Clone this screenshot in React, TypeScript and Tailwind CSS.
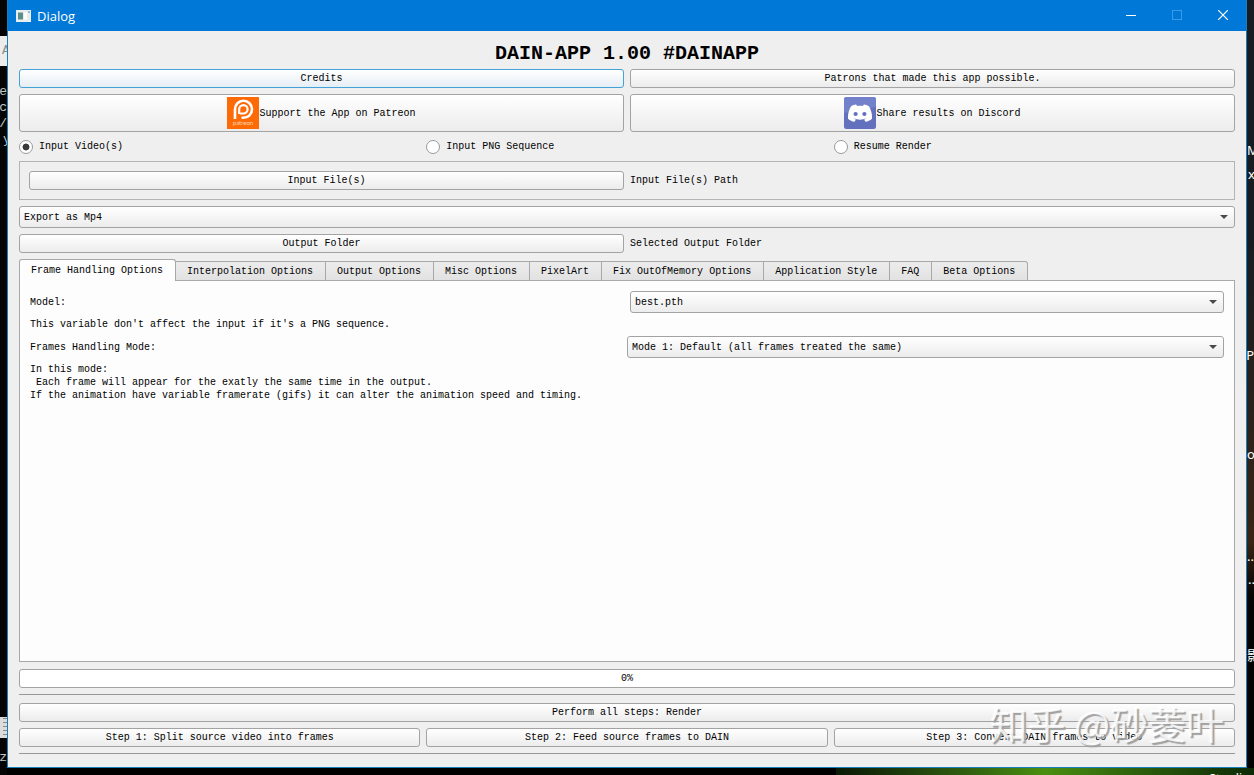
import { useState } from "react";
import type { ReactNode } from "react";

const MONO = "font-['Liberation_Mono','Noto_Sans_CJK_SC',monospace]";

const TABS = [
  "Frame Handling Options",
  "Interpolation Options",
  "Output Options",
  "Misc Options",
  "PixelArt",
  "Fix OutOfMemory Options",
  "Application Style",
  "FAQ",
  "Beta Options",
];

const SOURCES = ["Input Video(s)", "Input PNG Sequence", "Resume Render"];

function PushButton({ children, tall = false, focused = false }: { children: ReactNode; tall?: boolean; focused?: boolean }) {
  return (
    <button
      type="button"
      className={`flex w-full min-w-0 items-center justify-center rounded-[3px] border bg-linear-to-b from-white ${
        tall ? "h-[38px]" : "h-[19px]"
      } ${focused ? "border-[#45a2d6] to-[#e6eef5]" : "border-[#a3a3a3] to-[#ececec]"}`}
    >
      {children}
    </button>
  );
}

function ComboBox({ id, label, options }: { id: string; label?: string; options: string[] }) {
  return (
    <div className="relative h-[22px] min-w-0">
      <select
        id={id}
        aria-label={label}
        className="block h-full w-full appearance-none rounded-[3px] border border-[#a3a3a3] bg-linear-to-b from-white to-[#ececec] px-1"
      >
        {options.map((o) => (
          <option key={o}>{o}</option>
        ))}
      </select>
      <svg viewBox="0 0 8 4" className="pointer-events-none absolute top-[9px] right-[7px] h-1 w-2">
        <path d="M0 0H8L4 4Z" fill="#4a4a4a" />
      </svg>
    </div>
  );
}

function PatreonLogo() {
  return (
    <svg viewBox="0 0 32 32" className="size-8 shrink-0">
      <rect width="32" height="32" fill="#fd6a06" />
      <path d="M8 22V12.300a8.500 8.500 0 1 1 8.500 8.500H14.500" fill="none" stroke="#fff" strokeWidth="2.600" />
      <path d="M12.200 17V12.300a4.200 4.200 0 1 1 4.200 4.200H12.800" fill="none" stroke="#fff" strokeWidth="2.200" />
      <text x="16" y="28" textAnchor="middle" fontSize="6" fill="#ffd9b8" fontFamily="Lato, sans-serif">
        patreon
      </text>
    </svg>
  );
}

function DiscordLogo() {
  return (
    <svg viewBox="0 0 32 32" className="size-8 shrink-0">
      <rect width="32" height="32" rx="2.5" fill="#6270bd" />
      <path d="M0 2.5A2.5 2.5 0 0 1 2.5 0h27A2.5 2.5 0 0 1 32 2.5V10L0 16Z" fill="#7380ca" />
      <path
        d="M12.2 7.6C9.8 7.9 8 8.7 6.9 9.5 4.8 13 3.7 17.2 4 21.7c2 1.7 4.2 2.7 6.5 3l1.4-2.3c-.9-.3-1.7-.7-2.3-1.2 4 1.9 8.8 1.9 12.8 0-.6.5-1.4.9-2.3 1.2l1.4 2.3c2.3-.3 4.5-1.3 6.5-3 .3-4.5-.8-8.7-2.9-12.2-1.1-.8-2.9-1.6-5.300-1.900l-.8 1.300c-2-.3-4-.3-6 0Z"
        fill="#fff"
      />
      <circle cx="11.6" cy="17" r="2.1" fill="#6270bd" />
      <circle cx="20.4" cy="17" r="2.1" fill="#6270bd" />
    </svg>
  );
}

function TitleBar() {
  return (
    <header className="flex h-[31px] shrink-0 items-center justify-between bg-[#0078d7] pl-2 text-white">
      <div className="flex items-center gap-[6px]">
        <svg viewBox="0 0 15 12" className="h-3 w-[15px]">
          <rect width="15" height="12" fill="#e9edf0" />
          <rect x="2" y="2.5" width="5" height="7" fill="#5c8f8a" />
          <rect x="8" y="2.5" width="3" height="7" fill="#fff" />
          <rect x="12" y="1" width="2" height="2" fill="#9fb6d6" />
        </svg>
        <span className="font-['Open_Sans',sans-serif] text-[13px] leading-4">Dialog</span>
      </div>
      <div className="flex h-[30px] self-start">
        <button type="button" aria-label="Minimize" className="flex h-full w-[46px] items-center justify-center">
          <svg viewBox="0 0 10 10" className="size-[10px]">
            <path d="M0 5.5H10" stroke="#fff" />
          </svg>
        </button>
        <button type="button" aria-label="Maximize" disabled className="flex h-full w-[46px] items-center justify-center">
          <svg viewBox="0 0 10 10" className="size-[10px]">
            <rect x=".5" y=".5" width="9" height="9" fill="none" stroke="#3c9be6" />
          </svg>
        </button>
        <button type="button" aria-label="Close" className="flex h-full w-[46px] items-center justify-center">
          <svg viewBox="0 0 10 10" className="size-[10px]">
            <path d="M0 0L10 10M10 0L0 10" stroke="#fff" strokeWidth="1.2" />
          </svg>
        </button>
      </div>
    </header>
  );
}

function Desktop() {
  return (
    <div aria-hidden="true" className="absolute inset-0 overflow-hidden text-[13px] leading-4 whitespace-nowrap text-[#c4c4c4]">
      <div className="absolute inset-y-0 left-0 w-[7px] overflow-hidden bg-[#050505]">
        <div className="absolute top-[36px] h-[30px] w-full bg-[#ececec]" />
        <span className="absolute top-[43px] left-[2px] text-[#8a8a8a]">A</span>
        <span className="absolute top-[84px] right-0">ge</span>
        <span className="absolute top-[100px] right-0">.c</span>
        <span className="absolute top-[116px] right-0">n/</span>
        <span className="absolute top-[132px] left-[3px]">y</span>
        <div className="absolute top-[717px] h-[21px] w-full bg-[#dcdcdc]" />
        <div className="absolute top-[718px] right-0 h-[19px] w-1 bg-[repeating-linear-gradient(#888888_0_1px,#dcdcdc_1px_4px)]" />
        <span className="absolute top-[750px] right-0">-z</span>
      </div>
      <div className="absolute inset-y-0 right-0 w-[7px] overflow-hidden bg-linear-to-b from-[#171c22] from-30% via-[#3a2415] via-70% to-[#030303] to-78% font-['Noto_Sans','Noto_Sans_CJK_SC',sans-serif] text-white">
        <span className="absolute top-[142px] left-0">M</span>
        <span className="absolute top-[166px] left-[1px]">x</span>
        <span className="absolute top-[347px] right-0">PP</span>
        <span className="absolute top-[446px] left-0">o</span>
        <span className="absolute top-[548px] left-0">...</span>
        <span className="absolute top-[571px] left-[1px]">...</span>
        <span className="absolute top-[647px] left-0">影</span>
      </div>
      <div className="absolute right-0 bottom-0 h-[7px] w-1/3 overflow-hidden bg-linear-to-r from-[#0a1a06] via-[#4a8f10] to-[#0d2a06]">
        <span className="absolute top-[3px] right-[12px] font-['Noto_Sans',sans-serif] text-xs text-white">Stardi</span>
      </div>
    </div>
  );
}

export default function App() {
  const [source, setSource] = useState(SOURCES[0]);
  const [tab, setTab] = useState(TABS[0]);

  return (
    <div className={`relative flex min-h-screen flex-col bg-black px-[7px] pb-[7px] text-[10px] leading-[13px] text-black ${MONO}`}>
      <Desktop />
      <div className="relative flex flex-1 flex-col border border-t-0 border-[#1680b8] bg-[#efefef]">
        <TitleBar />
        <main className="flex flex-1 flex-col px-[11px] pb-[13px]">
          <h1 className="flex h-[38px] items-center justify-center pt-[7px] text-[20px] leading-6 font-bold">
            DAIN-APP 1.00 #DAINAPP
          </h1>

          <div className="grid grid-cols-2 gap-[6px]">
            <PushButton focused>Credits</PushButton>
            <PushButton>Patrons that made this app possible.</PushButton>
            <PushButton tall>
              <PatreonLogo />
              <span>Support the App on Patreon</span>
            </PushButton>
            <PushButton tall>
              <DiscordLogo />
              <span>Share results on Discord</span>
            </PushButton>
          </div>

          <div role="radiogroup" aria-label="Source" className="grid h-[29px] grid-cols-3 items-center gap-[6px]">
            {SOURCES.map((s) => (
              <label key={s} className="flex items-center gap-[6px]">
                <input
                  type="radio"
                  name="source"
                  checked={source === s}
                  onChange={() => setSource(s)}
                  className="size-[14px] appearance-none rounded-full border border-[#9a9a9a] bg-white checked:bg-radial checked:from-[#3a3a3a] checked:from-35% checked:to-white checked:to-45%"
                />
                <span>{s}</span>
              </label>
            ))}
          </div>

          <div className="grid grid-cols-2 items-center gap-[6px] border border-[#b4b4b4] p-[9px]">
            <PushButton>Input File(s)</PushButton>
            <span>Input File(s) Path</span>
          </div>

          <div className="mt-[6px]">
            <ComboBox id="export" label="Export format" options={["Export as Mp4"]} />
          </div>

          <div className="mt-[6px] grid grid-cols-2 items-center gap-[6px]">
            <PushButton>Output Folder</PushButton>
            <span>Selected Output Folder</span>
          </div>

          <div role="tablist" className="relative z-10 mt-[6px] -mb-px flex h-[22px] items-end">
            {TABS.map((t) => (
              <button
                key={t}
                type="button"
                role="tab"
                aria-selected={tab === t}
                onClick={() => setTab(t)}
                className={`border-t border-r border-[#a8a8a8] pr-3 pl-[11px] whitespace-nowrap first:border-l last:rounded-tr-[3px] ${
                  tab === t
                    ? "h-[22px] rounded-t-[3px] bg-[#fdfdfd] pb-px"
                    : "h-5 border-b bg-linear-to-b from-[#ececec] to-[#e2e2e2]"
                }`}
              >
                {t}
              </button>
            ))}
          </div>

          <section role="tabpanel" aria-label={tab} className="flex flex-1 flex-col gap-[5px] border border-[#a8a8a8] bg-[#fdfdfd] p-[10px]">
            <div className="grid grid-cols-2 items-center gap-[6px]">
              <label htmlFor="model">Model:</label>
              <ComboBox id="model" options={["best.pth"]} />
            </div>
            <p>This variable don't affect the input if it's a PNG sequence.</p>
            <div className="grid grid-cols-2 items-center">
              <label htmlFor="mode">Frames Handling Mode:</label>
              <ComboBox id="mode" options={["Mode 1: Default (all frames treated the same)"]} />
            </div>
            <p className="whitespace-pre-wrap">
              {"In this mode:\n Each frame will appear for the exatly the same time in the output.\nIf the animation have variable framerate (gifs) it can alter the animation speed and timing."}
            </p>
          </section>

          <div
            role="progressbar"
            aria-label="Progress"
            aria-valuenow={0}
            className="mt-[7px] flex h-[19px] items-center justify-center rounded-[3px] border border-[#a3a3a3] bg-white"
          >
            0%
          </div>
          <hr className="mt-[6px] border-[#989898]" />
          <div className="mt-2 flex flex-col gap-[6px]">
            <PushButton>Perform all steps: Render</PushButton>
            <div className="grid grid-cols-3 gap-[6px]">
              <PushButton>Step 1: Split source video into frames</PushButton>
              <PushButton>Step 2: Feed source frames to DAIN</PushButton>
              <PushButton>Step 3: Convert DAIN frames to video</PushButton>
            </div>
          </div>
          <hr className="mt-[6px] border-[#989898]" />
        </main>
      </div>
      <div className="pointer-events-none absolute right-[30px] bottom-[30px] font-['Noto_Sans_CJK_SC',sans-serif] text-[38px] leading-[44px] whitespace-nowrap text-white/80 [text-shadow:2px_2px_1px_#a0a0a0]">
        知乎 @砂菱叶
      </div>
    </div>
  );
}
